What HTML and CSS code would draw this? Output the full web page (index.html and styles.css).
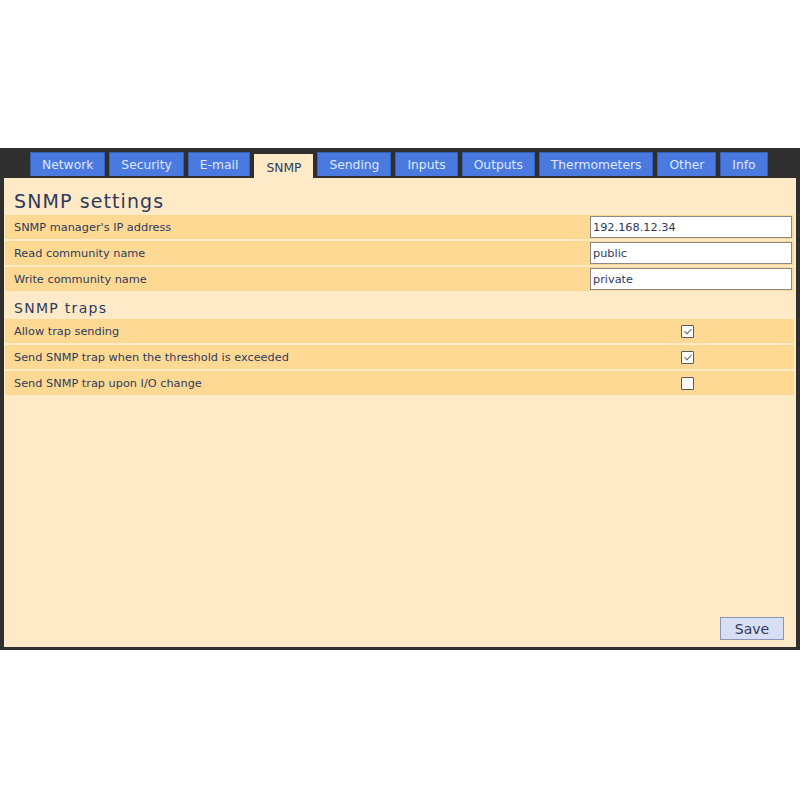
FILE: index.html
```html
<!DOCTYPE html>
<html>
<head>
<meta charset="utf-8">
<title>SNMP settings</title>
<link rel="stylesheet" href="styles.css">
</head>
<body>
<div class="frame">
  <ul class="tabs">
    <li class="tab">Network</li>
    <li class="tab">Security</li>
    <li class="tab">E-mail</li>
    <li class="tab active">SNMP</li>
    <li class="tab">Sending</li>
    <li class="tab">Inputs</li>
    <li class="tab">Outputs</li>
    <li class="tab">Thermometers</li>
    <li class="tab">Other</li>
    <li class="tab">Info</li>
  </ul>
  <div class="panel">
    <h1 class="title">SNMP settings</h1>
    <div class="rows">
      <div class="row"><span class="label">SNMP manager's IP address</span><input class="field" type="text" value="192.168.12.34"></div>
      <div class="row"><span class="label">Read community name</span><input class="field" type="text" value="public"></div>
      <div class="row"><span class="label">Write community name</span><input class="field" type="text" value="private"></div>
    </div>
    <h2 class="subtitle">SNMP traps</h2>
    <div class="rows">
      <div class="row check-row"><span class="label">Allow trap sending</span><span class="box checked"></span></div>
      <div class="row check-row"><span class="label">Send SNMP trap when the threshold is exceeded</span><span class="box checked"></span></div>
      <div class="row check-row"><span class="label">Send SNMP trap upon I/O change</span><span class="box"></span></div>
    </div>
    <div class="actions">
      <button class="save" type="button">Save</button>
    </div>
  </div>
</div>
</body>
</html>
```
FILE: styles.css
```css
html, body {
  margin: 0;
  padding: 0;
  background: #ffffff;
}

body {
  font-family: "DejaVu Sans", Verdana, sans-serif;
  padding-top: 148px;
}

.frame {
  background: #2f2f2f;
  padding: 4px 4px 3px 4px;
  height: 495px;
  display: flex;
  flex-direction: column;
}

.tabs {
  list-style: none;
  margin: 0;
  padding: 0 0 0 26px;
  display: flex;
  gap: 4px;
  height: 26px;
  align-items: flex-start;
}

.tab {
  background: #4a7ae0;
  color: #dfe8ff;
  border: 1px solid #3660b8;
  border-bottom: none;
  height: 24px;
  box-sizing: border-box;
  padding: 0 11px;
  font-size: 12.3px;
  line-height: 24px;
}

.tab.active {
  background: #feeac6;
  color: #2c3a5c;
  border-color: #feeac6;
  height: 26px;
  margin-top: 2px;
  line-height: 26px;
  padding: 0 11px;
}

.panel {
  flex: 1;
  background: #feeac6;
  padding: 10px 2px 7px 1px;
  display: flex;
  flex-direction: column;
  color: #2e3a5c;
}

.title {
  margin: 0 0 1px 9px;
  font-size: 19px;
  font-weight: normal;
  letter-spacing: 1.1px;
  line-height: 26px;
}

.subtitle {
  margin: 7px 0 1px 9px;
  font-size: 14px;
  font-weight: normal;
  letter-spacing: 1.3px;
  line-height: 20px;
}

.rows {
  display: flex;
  flex-direction: column;
  gap: 2px;
}

.row {
  background: #fed993;
  height: 24px;
  display: flex;
  align-items: center;
  justify-content: space-between;
  padding: 0 2px 0 9px;
  font-size: 11.3px;
}

.label {
  color: #2e3a5c;
}

.field {
  width: 202px;
  height: 22px;
  box-sizing: border-box;
  border: 1px solid #8a8a8a;
  background: #ffffff;
  font-family: "DejaVu Sans", Verdana, sans-serif;
  font-size: 11.3px;
  color: #2e3a5c;
  padding: 0 2px;
  margin: 0;
}

.check-row {
  padding-right: 100px;
}

.box {
  width: 13px;
  height: 13px;
  box-sizing: border-box;
  border: 1px solid #5a5a5a;
  border-radius: 1px;
  background: #ffffff;
  position: relative;
}

.box.checked::after {
  content: "";
  position: absolute;
  left: 3.5px;
  top: 1px;
  width: 3px;
  height: 6px;
  border: solid #666;
  border-width: 0 1.5px 1.5px 0;
  transform: rotate(45deg);
}

.actions {
  margin-top: auto;
  display: flex;
  justify-content: flex-end;
  padding-right: 10px;
}

.save {
  width: 64px;
  height: 23px;
  background: #d8def4;
  border: 1px solid #8a94b4;
  color: #2e3a5c;
  font-family: "DejaVu Sans", Verdana, sans-serif;
  font-size: 14px;
  padding: 0;
}
```
